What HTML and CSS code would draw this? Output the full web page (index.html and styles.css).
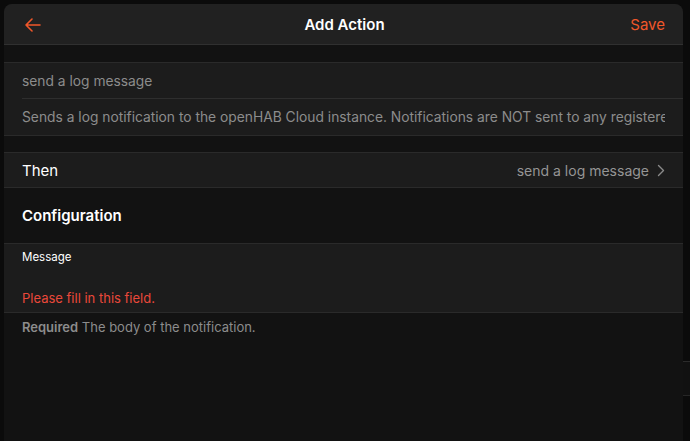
FILE: index.html
```html
<!DOCTYPE html>
<html lang="en">
<head>
    <title>Add Action</title>
    <link rel="stylesheet" href="styles.css">
</head>
<body>
    <div class="screen">
        <div class="panel">
            <div class="navbar">
                <a class="nav-back">
                    <svg width="17" height="14" viewBox="0 0 17 14">
                        <path d="M16 7H2M8 1L2 7l6 6" fill="none" stroke="#f0572a" stroke-width="1.6" stroke-linecap="round" stroke-linejoin="round"/>
                    </svg>
                </a>
                <div class="nav-title">Add Action</div>
                <a class="nav-save">Save</a>
            </div>

            <div class="list">
                <div class="row row-inset muted">send a log message</div>
                <div class="row muted">
                    <span class="clip">Sends a log notification to the openHAB Cloud instance. Notifications are NOT sent to any registered devices.</span>
                </div>
            </div>

            <div class="list list-then">
                <div class="row link">
                    <span class="row-title">Then</span>
                    <span class="row-after">send a log message</span>
                    <svg class="chevron" width="8" height="13" viewBox="0 0 8 13">
                        <path d="M1.5 1.5l5 5-5 5" fill="none" stroke="#8a8a8a" stroke-width="1.4" stroke-linecap="round" stroke-linejoin="round"/>
                    </svg>
                </div>
            </div>

            <div class="block-title">Configuration</div>

            <div class="list list-config">
                <div class="field">
                    <div class="field-label">Message</div>
                    <div class="field-error">Please fill in this field.</div>
                </div>
            </div>
            <div class="field-info"><b>Required</b> The body of the notification.</div>
        </div>
        <div class="side">
            <div class="side-block"></div>
        </div>
    </div>
</body>
</html>
```

FILE: styles.css
```css
* {
    margin: 0;
    padding: 0;
    box-sizing: border-box;
    font-family: Inter, 'Noto Sans', sans-serif;
}

body {
    background: #0b0b0b;
    height: 441px;
    overflow: hidden;
}

.screen {
    display: flex;
    height: 100%;
    padding: 4px 0 0 4px;
}

.panel {
    width: 679px;
    background: #121212;
    border-radius: 8px 8px 0 0;
    overflow: hidden;
}

.side {
    flex: 1;
    padding-top: 357px;
}

.side-block {
    height: 35px;
    border-top: 1px solid #2b2b2b;
    border-bottom: 1px solid #262626;
    background: #111;
}

.navbar {
    height: 41px;
    background: #212121;
    border-bottom: 1px solid #303030;
    display: grid;
    grid-template-columns: 1fr auto 1fr;
    align-items: center;
    padding: 1px 18px 0 20px;
}

.nav-back {
    display: flex;
}

.nav-title {
    color: #fff;
    font-size: 15px;
    font-weight: 600;
}

.nav-save {
    justify-self: end;
    color: #f0572a;
    font-size: 15px;
}

.list {
    margin-top: 17px;
    background: #1c1c1c;
    border-top: 1px solid #2a2a2a;
    border-bottom: 1px solid #2a2a2a;
}

.list-then {
    margin-top: 16px;
}

.list-config {
    margin-top: 0;
}

.row {
    height: 36px;
    display: flex;
    align-items: center;
    padding: 0 18px;
    font-size: 13.8px;
    color: #fff;
}

.row-inset {
    position: relative;
}

.row-inset::after {
    content: "";
    position: absolute;
    left: 18px;
    right: 0;
    bottom: 0;
    border-bottom: 1px solid #2e2e2e;
}

.muted {
    color: #8c8c8c;
}

.clip {
    white-space: nowrap;
    overflow: hidden;
    text-overflow: clip;
    min-width: 0;
}

.link {
    height: 34px;
}

.row-title {
    flex: 1;
    font-size: 15px;
}

.row-after {
    color: #959595;
    font-size: 14px;
}

.chevron {
    margin-left: 8px;
}

.block-title {
    height: 55px;
    display: flex;
    align-items: center;
    padding-left: 18px;
    color: #fff;
    font-size: 15px;
    font-weight: 600;
}

.field {
    height: 68px;
    padding: 6px 18px 0;
}

.field-label {
    color: #fff;
    font-size: 11.5px;
    line-height: 14px;
}

.field-error {
    margin-top: 26px;
    color: #e9483a;
    font-size: 13px;
}

.field-info {
    padding: 6px 18px;
    color: #8c8c8c;
    font-size: 13px;
}

.field-info b {
    font-weight: 600;
}
```
